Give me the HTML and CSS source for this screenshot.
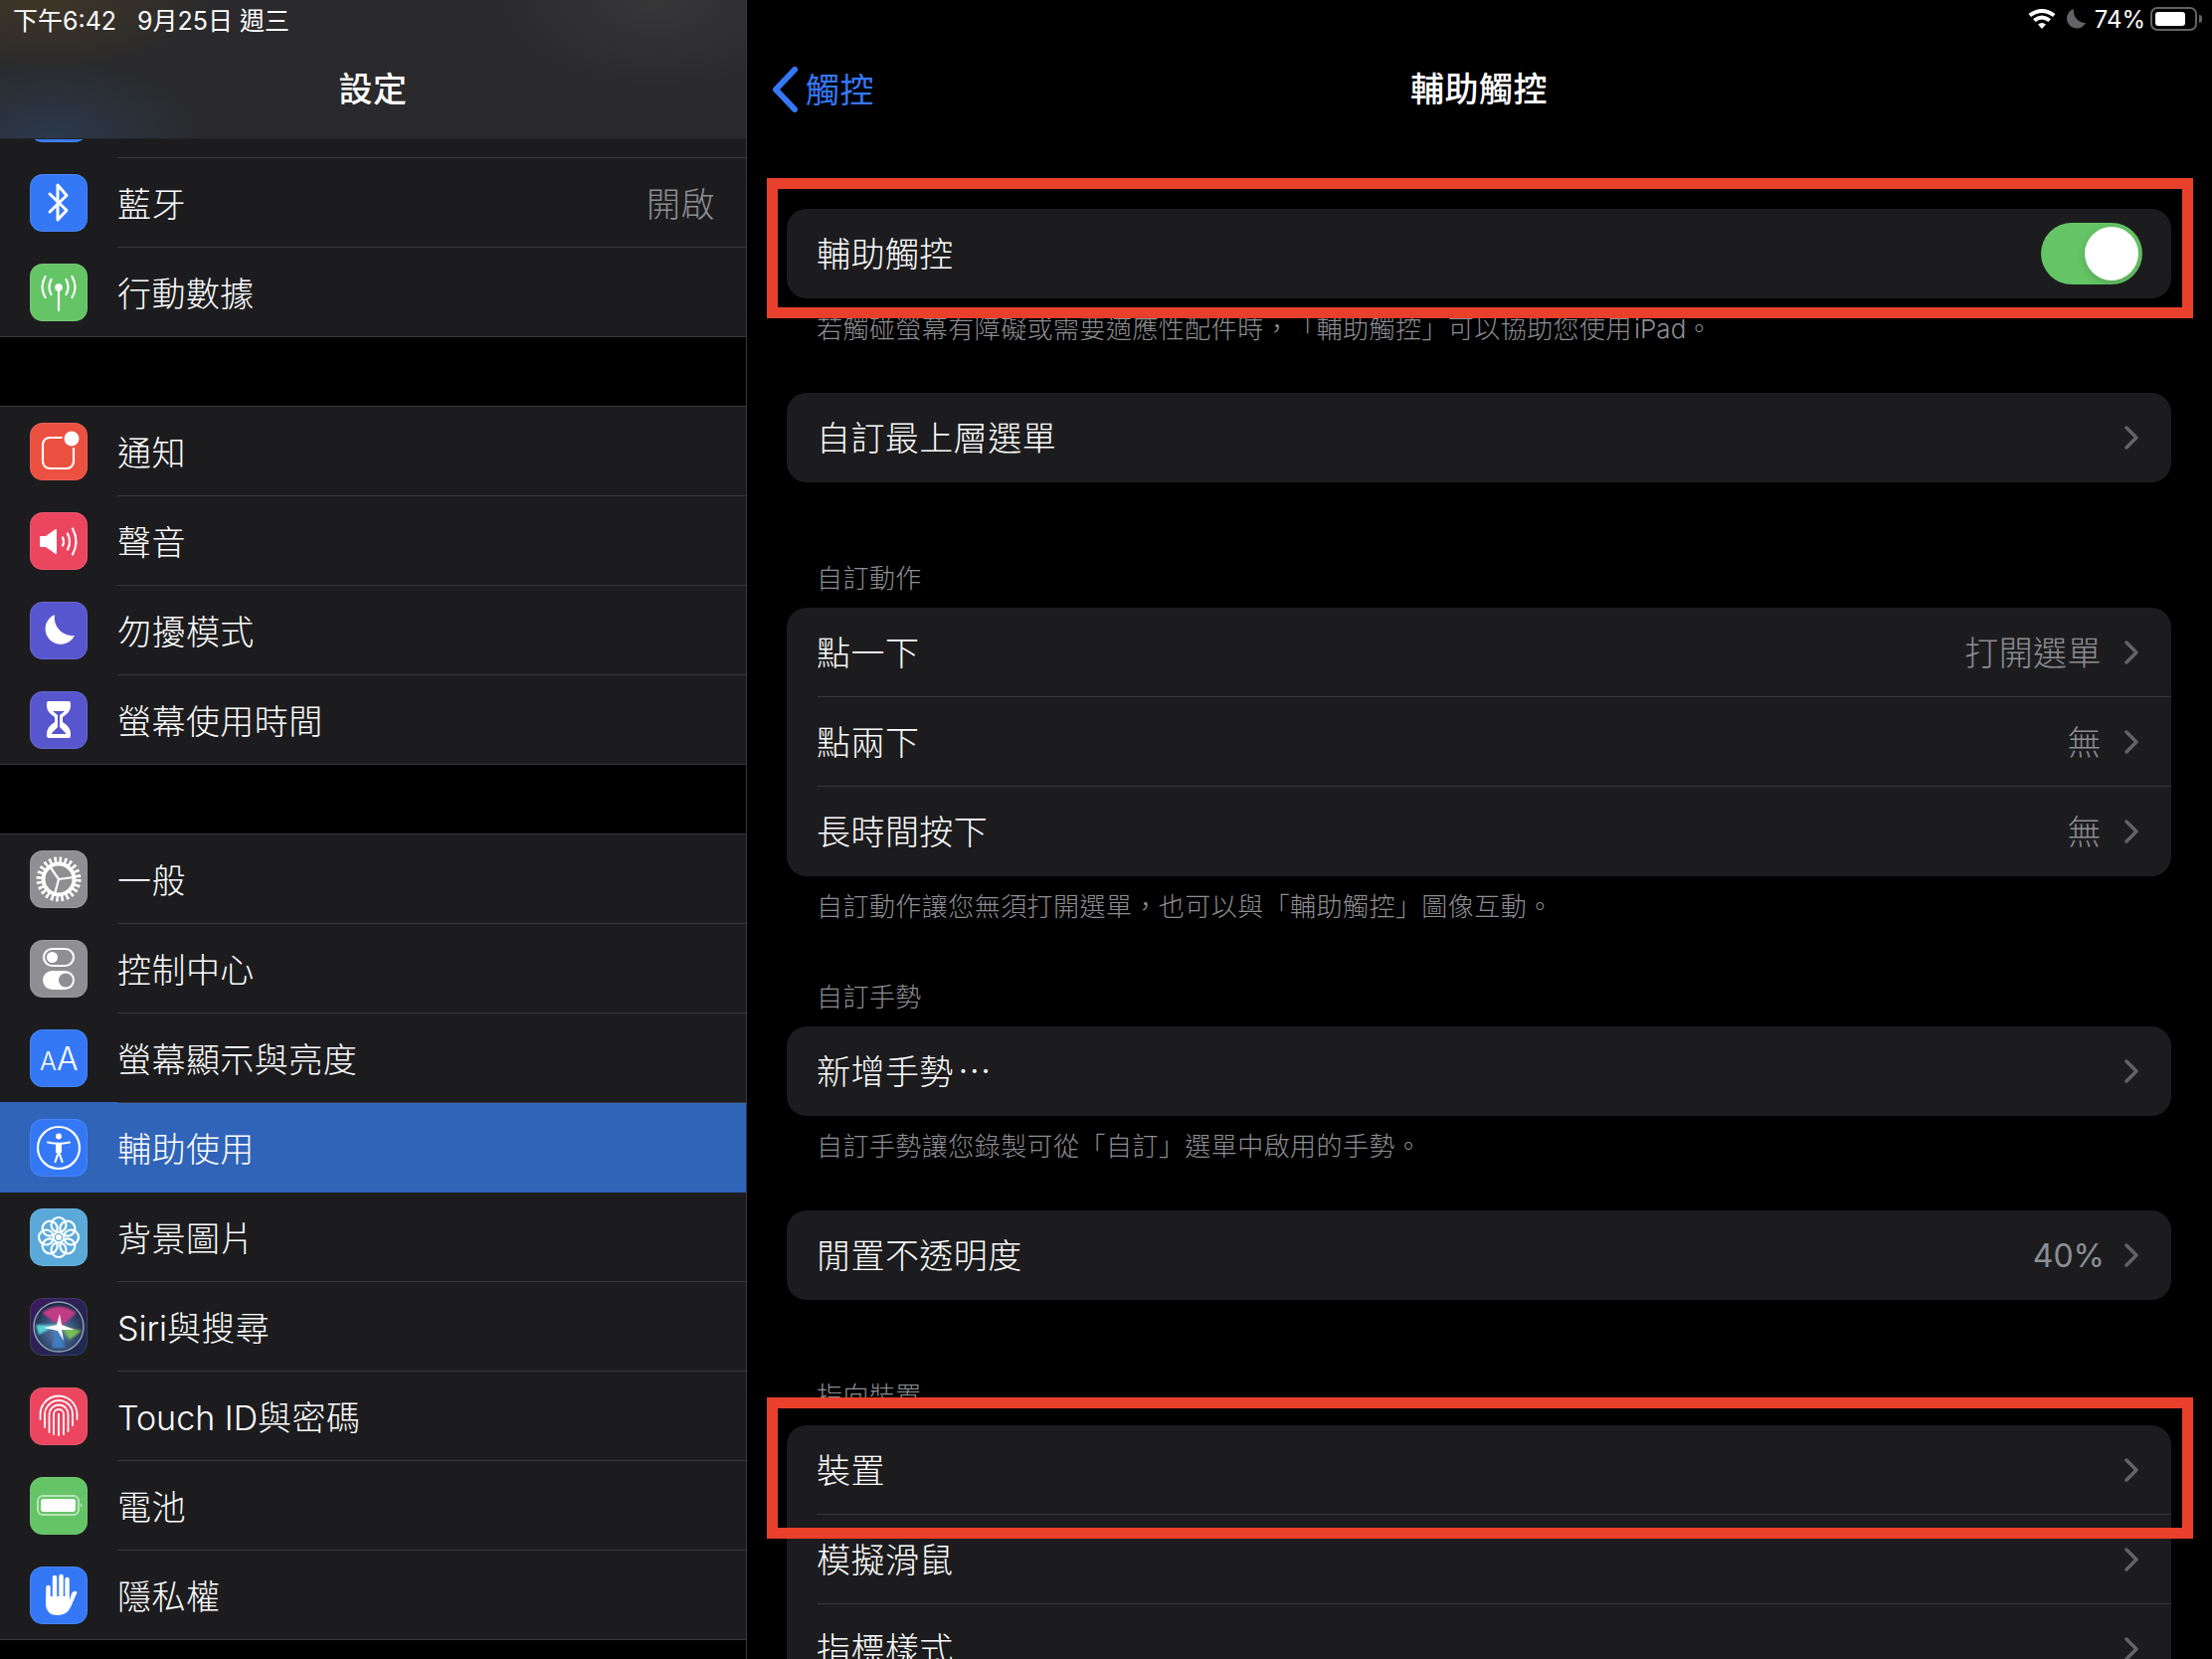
FILE: index.html
```html
<!DOCTYPE html>
<html>
<head>
    <title>輔助觸控</title>
    <link rel="stylesheet" href="styles.css">
</head>
<body>
    <div class="screen">
        <aside class="sidebar">
            <div class="side-list">
                <div class="group group-first">
                    <div class="row"><span class="icon blue"></span><div class="row-body"></div></div>
                    <div class="row">
                        <span class="icon blue">
                            <svg viewBox="0 0 58 58"><path class="line" d="M20 20L37 36.5L28 46V11L37 21.5L20 38"/></svg>
                        </span>
                        <div class="row-body"><span>藍牙</span><span class="side-value">開啟</span></div>
                    </div>
                    <div class="row">
                        <span class="icon green">
                            <svg viewBox="0 0 58 58">
                                <circle class="solid" cx="29" cy="24" r="3.8"/>
                                <path class="line thin" d="M29 25V47M21.5 16Q17.5 24 21.5 31M36.5 16Q40.5 24 36.5 31M15.5 13Q9.5 24 15.5 34M42.5 13Q48.5 24 42.5 34"/>
                            </svg>
                        </span>
                        <div class="row-body"><span>行動數據</span></div>
                    </div>
                </div>

                <div class="group">
                    <div class="row">
                        <span class="icon red">
                            <svg viewBox="0 0 58 58">
                                <rect class="line thin" x="13" y="15" width="31" height="31" rx="7"/>
                                <circle class="solid cut-red" cx="42" cy="16" r="8.5"/>
                            </svg>
                        </span>
                        <div class="row-body"><span>通知</span></div>
                    </div>
                    <div class="row">
                        <span class="icon pink">
                            <svg viewBox="0 0 58 58">
                                <path class="solid" d="M10 25Q10 24 11 24H16L25.5 17.3Q27 16.5 27 18V41Q27 42.5 25.5 41.7L16 35H11Q10 35 10 34Z"/>
                                <path class="line thin" d="M33 25.5Q35 29.5 33 33.5M38 21.5Q42 29.5 38 37.5M43 16.5Q50 29.5 43 42.5"/>
                            </svg>
                        </span>
                        <div class="row-body"><span>聲音</span></div>
                    </div>
                    <div class="row">
                        <span class="icon indigo">
                            <svg viewBox="0 0 58 58"><path class="solid" d="M25 13A15.5 15.5 0 1 0 45 34A18 18 0 0 1 25 13Z"/></svg>
                        </span>
                        <div class="row-body"><span>勿擾模式</span></div>
                    </div>
                    <div class="row">
                        <span class="icon indigo">
                            <svg viewBox="0 0 58 58">
                                <path class="solid" d="M19 10H39Q41 10 41 12V15Q41 21 33 26V31Q41 36 41 43V45Q41 47 39 47H19Q17 47 17 45V43Q17 36 25 31V26Q17 21 17 15V12Q17 10 19 10Z"/>
                                <path class="cut-fill" d="M23 20H35L30 24V36L36 42V43H22V42L28 36V24Z"/>
                            </svg>
                        </span>
                        <div class="row-body"><span>螢幕使用時間</span></div>
                    </div>
                </div>

                <div class="group">
                    <div class="row">
                        <span class="icon grey">
                            <svg viewBox="0 0 58 58">
                                <circle class="gear-teeth" cx="29" cy="29" r="19.500"/>
                                <circle class="line gear-ring" cx="29" cy="29" r="15.500"/>
                                <path class="line thin" d="M29 29L20 16M29 29L44 27M29 29L25 44"/>
                            </svg>
                        </span>
                        <div class="row-body"><span>一般</span></div>
                    </div>
                    <div class="row">
                        <span class="icon grey">
                            <svg viewBox="0 0 58 58">
                                <rect class="line thin" x="14" y="9" width="30" height="17" rx="8.5"/>
                                <circle class="solid" cx="22.5" cy="17.5" r="5.5"/>
                                <rect class="solid" x="13" y="31" width="32" height="19" rx="9.5"/>
                                <circle class="cut-grey" cx="36" cy="40.5" r="7"/>
                            </svg>
                        </span>
                        <div class="row-body"><span>控制中心</span></div>
                    </div>
                    <div class="row">
                        <span class="icon blue">
                            <svg viewBox="0 0 58 58">
                                <text class="aa-small" x="10" y="41">A</text>
                                <text class="aa-big" x="27" y="41">A</text>
                            </svg>
                        </span>
                        <div class="row-body"><span>螢幕顯示與亮度</span></div>
                    </div>
                    <div class="row selected">
                        <span class="icon blue">
                            <svg viewBox="0 0 58 58">
                                <circle class="line thin" cx="29" cy="29" r="21"/>
                                <circle class="solid" cx="29" cy="17.5" r="3"/>
                                <path class="line thin" d="M18 23.5Q29 26 40 23.5M29 25V33M29 33L25.5 43M29 33L32.5 43"/>
                                <path class="solid" d="M26 25H32V34H26Z"/>
                            </svg>
                        </span>
                        <div class="row-body"><span>輔助使用</span></div>
                    </div>
                    <div class="row">
                        <span class="icon sky">
                            <svg viewBox="0 0 58 58">
                                <g class="flower">
                                    <circle cx="29" cy="16.500" r="7.500"/>
                                    <circle cx="29" cy="16.500" r="7.500" transform="rotate(45 29 29)"/>
                                    <circle cx="29" cy="16.500" r="7.500" transform="rotate(90 29 29)"/>
                                    <circle cx="29" cy="16.500" r="7.500" transform="rotate(135 29 29)"/>
                                    <circle cx="29" cy="16.500" r="7.500" transform="rotate(180 29 29)"/>
                                    <circle cx="29" cy="16.500" r="7.500" transform="rotate(225 29 29)"/>
                                    <circle cx="29" cy="16.500" r="7.500" transform="rotate(270 29 29)"/>
                                    <circle cx="29" cy="16.500" r="7.500" transform="rotate(315 29 29)"/>
                                </g>
                                <circle class="solid" cx="29" cy="29" r="3"/>
                            </svg>
                        </span>
                        <div class="row-body"><span>背景圖片</span></div>
                    </div>
                    <div class="row">
                        <span class="icon siri">
                            <svg viewBox="0 0 58 58">
                                <defs>
                                    <radialGradient id="siriBall" cx="50%" cy="60%" r="55%">
                                        <stop offset="0" stop-color="#5f86b5"/>
                                        <stop offset="1" stop-color="#1d2c4d"/>
                                    </radialGradient>
                                    <filter id="siriBlur"><feGaussianBlur stdDeviation="1.2"/></filter>
                                </defs>
                                <circle cx="29" cy="29" r="25" fill="url(#siriBall)" stroke="#8fa0ad" stroke-width="1.500"/>
                                <g filter="url(#siriBlur)">
                                    <path fill="#c03c86" d="M12 15Q29 2 47 15L31 29Z"/>
                                    <path fill="#7abf52" d="M31 28L52 33L40 42Z"/>
                                    <path fill="#3f7fc4" d="M27 30L36 50L22 50Z"/>
                                    <path fill="#58d3d8" d="M6 27L28 27L9 37Z"/>
                                </g>
                                <path fill="#fff" d="M30 16L32 27L45 32L32 32L34 43L28 33L14 30L27 27Z"/>
                            </svg>
                        </span>
                        <div class="row-body"><span><span class="latin">Siri</span>與搜尋</span></div>
                    </div>
                    <div class="row">
                        <span class="icon pink">
                            <svg viewBox="0 0 58 58">
                                <path class="line print" d="M10.5 32V27A18.5 18.5 0 0 1 47.5 27V32M15 40V27A14 14 0 0 1 43 27V38M19.5 45V27A9.5 9.5 0 0 1 38.500 27V44M24 47V27A5 5 0 0 1 34 27V47M29 27V48"/>
                            </svg>
                        </span>
                        <div class="row-body"><span><span class="latin">Touch ID</span>與密碼</span></div>
                    </div>
                    <div class="row">
                        <span class="icon green">
                            <svg viewBox="0 0 58 58">
                                <rect class="cell-line" x="8" y="19" width="41" height="19" rx="5"/>
                                <rect class="solid" x="11" y="22" width="35" height="13" rx="3"/>
                                <path class="cell-nub" d="M51 26Q54 28.500 51 31Z"/>
                            </svg>
                        </span>
                        <div class="row-body"><span>電池</span></div>
                    </div>
                    <div class="row">
                        <span class="icon blue">
                            <svg viewBox="0 0 58 58">
                                <path class="line fat" d="M18.500 21V36M25 11V32M31.500 10V32M37.500 13V34"/>
                                <path class="solid" d="M16 30H40V34L42 27Q45 23 47.500 26L41 41Q37 49 28 49Q17 49 16 39Z"/>
                            </svg>
                        </span>
                        <div class="row-body"><span>隱私權</span></div>
                    </div>
                </div>
            </div>

            <header class="side-head">
                <div class="side-status">
                    <span>下午6:42</span>
                    <span>9月25日 週三</span>
                </div>
                <div class="side-title">設定</div>
            </header>
        </aside>

        <main class="detail">
            <div class="status-right">
                <svg class="wifi" viewBox="0 0 28 20">
                    <path d="M14 20L10 15.500Q14 12.500 18 15.500Z"/>
                    <path d="M7.500 13L5 10Q14 3 23 10L20.500 13Q14 8 7.500 13Z"/>
                    <path d="M3 8L0.500 5Q14 -5 27.500 5L25 8Q14 0 3 8Z"/>
                </svg>
                <svg class="moon" viewBox="0 0 20 20"><path d="M8 0A10 10 0 1 0 20 14A12 12 0 0 1 8 0Z"/></svg>
                <span class="percent">74%</span>
                <div class="battery"><div class="battery-fill"></div></div>
                <div class="battery-nub"></div>
            </div>

            <nav class="nav">
                <div class="back">
                    <svg class="back-arrow" viewBox="0 0 26 46"><path d="M22 3L3 23L22 43"/></svg>
                    <span class="back-text">觸控</span>
                </div>
                <div class="nav-title">輔助觸控</div>
            </nav>

            <section class="section">
                <div class="card">
                    <div class="card-row">
                        <div class="card-body">
                            <span class="label">輔助觸控</span>
                            <div class="switch"><div class="knob"></div></div>
                        </div>
                    </div>
                </div>
                <p class="hint">若觸碰螢幕有障礙或需要適應性配件時，「輔助觸控」可以協助您使用<span class="latin latin-gap">iPad</span>。</p>
            </section>

            <section class="section after-hint">
                <div class="card">
                    <div class="card-row">
                        <div class="card-body">
                            <span class="label">自訂最上層選單</span>
                            <svg class="chevron" viewBox="0 0 14 24"><path d="M2 2L12 12L2 22"/></svg>
                        </div>
                    </div>
                </div>
            </section>

            <section class="section after-card">
                <h2 class="section-title">自訂動作</h2>
                <div class="card">
                    <div class="card-row">
                        <div class="card-body">
                            <span class="label">點一下</span>
                            <span class="value">打開選單</span>
                            <svg class="chevron" viewBox="0 0 14 24"><path d="M2 2L12 12L2 22"/></svg>
                        </div>
                    </div>
                    <div class="card-row">
                        <div class="card-body">
                            <span class="label">點兩下</span>
                            <span class="value">無</span>
                            <svg class="chevron" viewBox="0 0 14 24"><path d="M2 2L12 12L2 22"/></svg>
                        </div>
                    </div>
                    <div class="card-row">
                        <div class="card-body">
                            <span class="label">長時間按下</span>
                            <span class="value">無</span>
                            <svg class="chevron" viewBox="0 0 14 24"><path d="M2 2L12 12L2 22"/></svg>
                        </div>
                    </div>
                </div>
                <p class="hint">自訂動作讓您無須打開選單，也可以與「輔助觸控」圖像互動。</p>
            </section>

            <section class="section after-note">
                <h2 class="section-title">自訂手勢</h2>
                <div class="card">
                    <div class="card-row">
                        <div class="card-body">
                            <span class="label">新增手勢<span class="dots">⋯</span></span>
                            <svg class="chevron" viewBox="0 0 14 24"><path d="M2 2L12 12L2 22"/></svg>
                        </div>
                    </div>
                </div>
                <p class="hint">自訂手勢讓您錄製可從「自訂」選單中啟用的手勢。</p>
            </section>

            <section class="section after-hint">
                <div class="card">
                    <div class="card-row">
                        <div class="card-body">
                            <span class="label">閒置不透明度</span>
                            <span class="value value-num">40%</span>
                            <svg class="chevron" viewBox="0 0 14 24"><path d="M2 2L12 12L2 22"/></svg>
                        </div>
                    </div>
                </div>
            </section>

            <section class="section after-card">
                <h2 class="section-title">指向裝置</h2>
                <div class="card">
                    <div class="card-row">
                        <div class="card-body">
                            <span class="label">裝置</span>
                            <svg class="chevron" viewBox="0 0 14 24"><path d="M2 2L12 12L2 22"/></svg>
                        </div>
                    </div>
                    <div class="card-row">
                        <div class="card-body">
                            <span class="label">模擬滑鼠</span>
                            <svg class="chevron" viewBox="0 0 14 24"><path d="M2 2L12 12L2 22"/></svg>
                        </div>
                    </div>
                    <div class="card-row">
                        <div class="card-body">
                            <span class="label">指標樣式</span>
                            <svg class="chevron" viewBox="0 0 14 24"><path d="M2 2L12 12L2 22"/></svg>
                        </div>
                    </div>
                </div>
            </section>

            <div class="mark mark-top"></div>
            <div class="mark mark-bottom"></div>
        </main>
    </div>
</body>
</html>
```

FILE: styles.css
```css
* {
    box-sizing: border-box;
}
body {
    margin: 0;
    background-color: #000;
    color: #fff;
    font-family: Inter, "Noto Sans CJK TC", sans-serif;
    font-size: 34px;
    font-weight: 300;
    letter-spacing: 0.45px;
    text-spacing-trim: space-all;
}
.latin {
    letter-spacing: 0;
}
.latin-gap {
    margin-left: 2px;
}
.dots {
    margin-left: 4px;
}
.screen {
    display: flex;
    height: 1668px;
    overflow: hidden;
}

/* left column */
.sidebar {
    position: relative;
    width: 751px;
    flex: none;
    border-right: 1px solid #38383a;
    overflow: hidden;
}
.side-list {
    padding-top: 69px;
}
.group {
    margin-top: 69px;
    border-top: 1px solid #38383a;
    border-bottom: 1px solid #38383a;
    background-color: #1c1c1e;
}
.group-first {
    margin-top: 0;
    border-top: none;
}
.row {
    display: flex;
    align-items: center;
    height: 90px;
    padding-left: 30px;
}
.group .row:last-child {
    height: 89px;
}
.group .row:last-child .row-body {
    border-bottom: none;
}
.row.selected {
    background-color: #3064b8;
    box-shadow: 0 -1px 0 #3064b8;
}
.row.selected .row-body {
    border-bottom-color: #3064b8;
}
.row-body {
    display: flex;
    align-items: center;
    justify-content: space-between;
    flex: 1;
    height: 100%;
    margin-left: 30px;
    padding-right: 31px;
    border-bottom: 1px solid #38383a;
}
.side-value {
    color: #8e8e93;
}
.icon {
    display: block;
    width: 58px;
    height: 58px;
    flex: none;
    border-radius: 13px;
    box-shadow: inset 0 0 0 1px rgba(255, 255, 255, 0.1);
}
.icon svg {
    display: block;
    width: 58px;
    height: 58px;
}
.blue { background-color: #3478f6; }
.green { background-color: #65c466; }
.red { background-color: #eb5040; }
.pink { background-color: #eb4560; }
.indigo { background-color: #5856ce; }
.grey { background-color: #8e8e93; }
.sky { background-color: #5aa9d9; }
.siri { background: linear-gradient(135deg, #3a1a5e, #1b2a4e); }

/* svg bits for the icons */
.line {
    fill: none;
    stroke: #fff;
    stroke-width: 3;
    stroke-linecap: round;
    stroke-linejoin: round;
}
.line.thin {
    stroke-width: 2.2;
}
.line.fat {
    stroke-width: 4.5;
}
.line.print {
    stroke-width: 1.8;
    stroke-dasharray: 16 1.5 24 1.5;
}
.line.gear-ring {
    stroke-width: 4;
}
.solid {
    fill: #fff;
}
.cut-red {
    stroke: #eb5040;
    stroke-width: 2;
}
.cut-fill {
    fill: #5856ce;
}
.cut-grey {
    fill: #8e8e93;
}
.gear-teeth {
    fill: none;
    stroke: #fff;
    stroke-width: 6;
    stroke-dasharray: 2.6 2.5;
}
.flower {
    fill: none;
    stroke: #fff;
    stroke-width: 2.2;
}
.aa-small,
.aa-big {
    fill: #fff;
    font-family: Inter, sans-serif;
    font-weight: 300;
    letter-spacing: 0;
}
.aa-small {
    font-size: 25px;
}
.aa-big {
    font-size: 32px;
}
.cell-line {
    fill: none;
    stroke: rgba(255, 255, 255, 0.55);
    stroke-width: 2;
}
.cell-nub {
    fill: rgba(255, 255, 255, 0.55);
}

/* frosted header lies over the list */
.side-head {
    position: absolute;
    top: 0;
    left: 0;
    right: 0;
    height: 140px;
    border-bottom: 1px solid #232325;
    background:
        radial-gradient(ellipse 150px 80px at 7% 100%, rgba(45, 85, 135, 0.35), transparent),
        radial-gradient(ellipse 170px 70px at 6% 0%, rgba(95, 70, 30, 0.4), transparent),
        radial-gradient(ellipse 160px 90px at 88% 0%, rgba(85, 85, 85, 0.3), transparent),
        #2a2a2c;
}
.side-status {
    display: flex;
    gap: 21px;
    height: 38px;
    margin-bottom: 2px;
    padding-left: 13px;
    align-items: center;
    font-size: 25px;
    font-weight: 400;
    letter-spacing: 0;
}
.side-title {
    height: 100px;
    line-height: 100px;
    text-align: center;
    font-size: 34px;
    font-weight: 500;
}

/* right column */
.detail {
    position: relative;
    flex: 1;
    padding: 0 41px 0 40px;
}
.status-right {
    position: absolute;
    top: 0;
    right: 10px;
    display: flex;
    align-items: center;
    height: 38px;
    font-size: 24px;
    font-weight: 400;
    letter-spacing: 0;
}
.wifi {
    width: 28px;
    height: 20px;
    fill: #fff;
}
.moon {
    width: 20px;
    height: 20px;
    margin-left: 10px;
    fill: #636366;
}
.percent {
    margin-left: 9px;
}
.battery {
    width: 47px;
    height: 24px;
    margin-left: 5px;
    padding: 3px;
    border: 2px solid #636366;
    border-radius: 7px;
}
.battery-fill {
    width: 30px;
    height: 100%;
    border-radius: 3px;
    background-color: #fff;
}
.battery-nub {
    width: 3px;
    height: 8px;
    margin-left: 2px;
    border-radius: 0 3px 3px 0;
    background-color: #636366;
}
.nav {
    position: relative;
    height: 210px;
    padding-top: 40px;
}
.nav-title {
    height: 100px;
    line-height: 100px;
    text-align: center;
    font-weight: 500;
}
.back {
    position: absolute;
    top: 40px;
    left: -14px;
    display: flex;
    align-items: center;
    height: 100px;
    color: #3478f6;
}
.back-arrow {
    width: 26px;
    height: 46px;
    margin-right: 7px;
    fill: none;
    stroke: #3478f6;
    stroke-width: 6;
    stroke-linecap: round;
    stroke-linejoin: round;
}
.back-text {
    margin-bottom: 4px;
    font-weight: 400;
}
.after-hint {
    margin-top: 47px;
}
.after-card {
    margin-top: 79px;
}
.after-note {
    margin-top: 56px;
}
.section-title {
    margin: 0 0 11px 30px;
    font-size: 26px;
    font-weight: 300;
    line-height: 36px;
    color: #8e8e93;
}
.hint {
    margin: 13px 0 -1px 30px;
    font-size: 26px;
    line-height: 36px;
    color: #8e8e93;
}
.card {
    border-radius: 20px;
    background-color: #1c1c1e;
    overflow: hidden;
}
.card-row {
    height: 90px;
    padding-left: 31px;
}
.card-body {
    display: flex;
    align-items: center;
    height: 100%;
    padding-right: 33px;
    border-bottom: 1px solid #38383a;
}
.card-row:last-child .card-body {
    border-bottom: none;
}
.label {
    flex: 1;
    margin: 0 0 3px -1px;
}
.value {
    margin: 0 23px 3px 0;
    color: #8e8e93;
}
.value-num {
    margin: 0 20px 0 0;
    font-size: 32px;
    font-weight: 400;
    letter-spacing: 0;
}
.chevron {
    width: 14px;
    height: 24px;
    flex: none;
    fill: none;
    stroke: #636366;
    stroke-width: 3.5;
    stroke-linecap: round;
    stroke-linejoin: round;
}
.switch {
    width: 102px;
    height: 62px;
    margin-right: -4px;
    padding: 4px;
    display: flex;
    justify-content: flex-end;
    border-radius: 31px;
    background-color: #65c466;
}
.knob {
    width: 54px;
    height: 54px;
    border-radius: 50%;
    background-color: #fff;
    box-shadow: 0 3px 8px rgba(0, 0, 0, 0.15);
}

/* red annotation frames drawn over the screenshot */
.mark {
    position: absolute;
    left: 20px;
    right: 19px;
    border: 11px solid #e8402a;
}
.mark-top {
    top: 179px;
    height: 141px;
}
.mark-bottom {
    top: 1405px;
    height: 142px;
}
```
